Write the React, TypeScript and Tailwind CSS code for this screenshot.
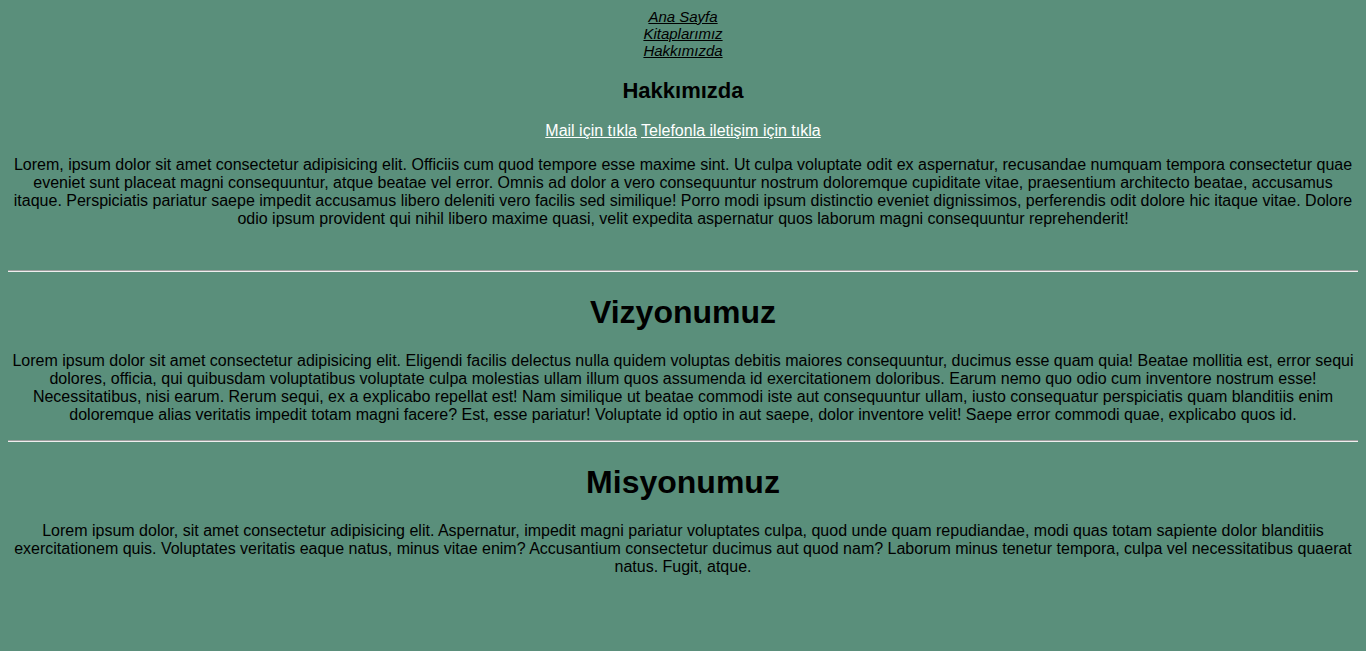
import React from "react";

const p1 =
  "Lorem, ipsum dolor sit amet consectetur adipisicing elit. Officiis cum quod tempore esse maxime sint. Ut culpa voluptate odit ex aspernatur, recusandae numquam tempora consectetur quae eveniet sunt placeat magni consequuntur, atque beatae vel error. Omnis ad dolor a vero consequuntur nostrum doloremque cupiditate vitae, praesentium architecto beatae, accusamus itaque. Perspiciatis pariatur saepe impedit accusamus libero deleniti vero facilis sed similique! Porro modi ipsum distinctio eveniet dignissimos, perferendis odit dolore hic itaque vitae. Dolore odio ipsum provident qui nihil libero maxime quasi, velit expedita aspernatur quos laborum magni consequuntur reprehenderit!";

const p2 =
  "Lorem ipsum dolor sit amet consectetur adipisicing elit. Eligendi facilis delectus nulla quidem voluptas debitis maiores consequuntur, ducimus esse quam quia! Beatae mollitia est, error sequi dolores, officia, qui quibusdam voluptatibus voluptate culpa molestias ullam illum quos assumenda id exercitationem doloribus. Earum nemo quo odio cum inventore nostrum esse! Necessitatibus, nisi earum. Rerum sequi, ex a explicabo repellat est! Nam similique ut beatae commodi iste aut consequuntur ullam, iusto consequatur perspiciatis quam blanditiis enim doloremque alias veritatis impedit totam magni facere? Est, esse pariatur! Voluptate id optio in aut saepe, dolor inventore velit! Saepe error commodi quae, explicabo quos id.";

const p3 =
  "Lorem ipsum dolor, sit amet consectetur adipisicing elit. Aspernatur, impedit magni pariatur voluptates culpa, quod unde quam repudiandae, modi quas totam sapiente dolor blanditiis exercitationem quis. Voluptates veritatis eaque natus, minus vitae enim? Accusantium consectetur ducimus aut quod nam? Laborum minus tenetur tempora, culpa vel necessitatibus quaerat natus. Fugit, atque.";

function Rule() {
  return <div className="h-0 border-t border-b border-t-[#9e9e9e] border-b-[#eeeeee]" />;
}

export default function App() {
  return (
    <div className="min-h-screen bg-[#5a8f7b] p-2 text-center text-black font-['Liberation_Sans',Arial,sans-serif] text-[16px]">
      <nav>
        <ul className="text-[15px] leading-[17px] italic">
          <li>
            <a href="#" className="underline text-black">Ana Sayfa</a>
          </li>
          <li>
            <a href="#" className="underline text-black">Kitaplarımız</a>
          </li>
          <li>
            <a href="#" className="underline text-black">Hakkımızda</a>
          </li>
        </ul>
      </nav>

      <h2 className="mt-[19px] text-[22px] font-bold leading-[25px]">Hakkımızda</h2>

      <div className="mt-[19px] leading-[18px]">
        <a href="#" className="underline text-white">Mail için tıkla</a>{" "}
        <a href="#" className="underline text-white">Telefonla iletişim için tıkla</a>
      </div>

      <p className="mt-4 leading-[18px]">{p1}</p>
      <div className="mt-4 h-[18px]" />

      <div className="mt-2">
        <Rule />
      </div>

      <h1 className="mt-[22px] text-[32px] font-bold leading-[37px]">Vizyonumuz</h1>
      <p className="mt-[21px] leading-[18px]">{p2}</p>

      <div className="mt-4">
        <Rule />
      </div>

      <h1 className="mt-[22px] text-[32px] font-bold leading-[37px]">Misyonumuz</h1>
      <p className="mt-[21px] leading-[18px]">{p3}</p>
    </div>
  );
}
